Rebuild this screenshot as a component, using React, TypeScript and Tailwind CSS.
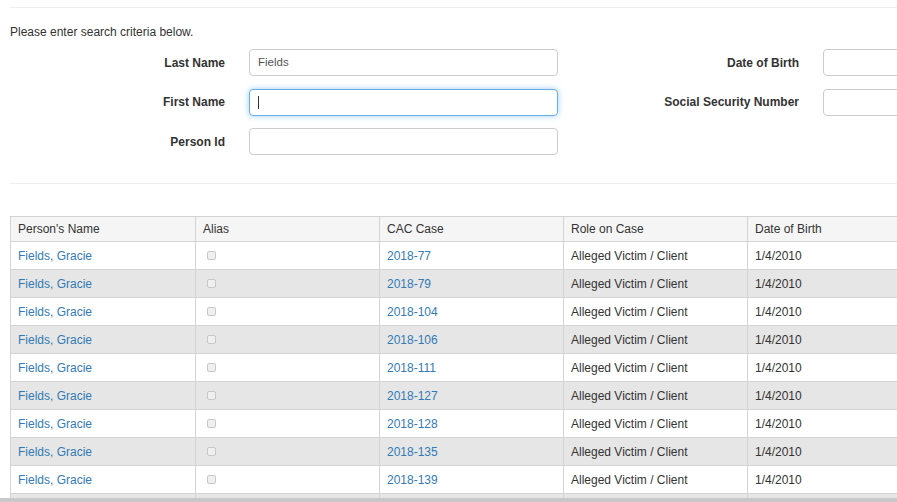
const rows = [
  "2018-77",
  "2018-79",
  "2018-104",
  "2018-106",
  "2018-111",
  "2018-127",
  "2018-128",
  "2018-135",
  "2018-139",
];

const Field = ({ label, value, focused }: { label: string; value?: string; focused?: boolean }) => (
  <div className="flex items-center">
    <label className="w-[215px] shrink-0 text-right font-bold text-[#333]">{label}</label>
    <div
      className={
        focused
          ? "ml-[24px] w-[309px] shrink-0 h-[27px] rounded-[4px] border border-[#66afe9] bg-white px-[8px] flex items-center shadow-[0_0_6px_rgba(102,175,233,0.6)]"
          : "ml-[24px] w-[309px] shrink-0 h-[27px] rounded-[4px] border border-[#ccc] bg-white px-[8px] flex items-center"
      }
    >
      {value && <span className="text-[#555] text-[11.5px]">{value}</span>}
      {focused && <span className="w-px h-[13px] bg-[#333]" />}
    </div>
  </div>
);

const Empty = () => <div className="h-[27px]" />;

export default function App() {
  return (
    <div
      className="h-[502px] w-[897px] overflow-hidden flex flex-col bg-white text-[12px] text-[#333]"
      style={{ fontFamily: '"Liberation Sans", Arial, sans-serif' }}
    >
      <div className="flex-1 overflow-hidden pl-[10px]">
        <div className="mt-[7px] border-t border-[#eee]" />
        <p className="mt-[17px] leading-[14px]">Please enter search criteria below.</p>

        {/* Search form */}
        <div className="mt-[10px] flex">
          <div className="flex flex-col gap-[12.5px]">
            <Field label="Last Name" value="Fields" />
            <Field label="First Name" focused />
            <Field label="Person Id" />
          </div>
          <div className="ml-[26px] flex flex-col gap-[12.5px]">
            <Field label="Date of Birth" />
            <Field label="Social Security Number" />
            <Empty />
          </div>
        </div>

        <div className="mt-[28px] border-t border-[#eee]" />

        {/* Results */}
        <table className="mt-[32px] w-[921px] table-fixed border-collapse">
          <thead>
            <tr className="bg-[#f5f5f5] h-[25px]">
              {["Person's Name", "Alias", "CAC Case", "Role on Case", "Date of Birth"].map((h, i) => (
                <th
                  key={h}
                  className={
                    i === 0
                      ? "w-[185px] border border-[#d4d4d4] px-[7px] text-left font-normal"
                      : "w-[184px] border border-[#d4d4d4] px-[7px] text-left font-normal"
                  }
                >
                  {h}
                </th>
              ))}
            </tr>
          </thead>
          <tbody>
            {rows.map((c, i) => (
              <tr key={c} className={i % 2 === 0 ? "h-[28px] bg-white" : "h-[28px] bg-[#e6e6e6]"}>
                <td className="border border-[#d4d4d4] px-[7px] text-[#337ab7]">Fields, Gracie</td>
                <td className="border border-[#d4d4d4] px-[11px]">
                  <span className="block w-[9px] h-[9px] rounded-[2px] border border-[#c8c8c8] bg-[#f0f0f0]" />
                </td>
                <td className="border border-[#d4d4d4] px-[7px] text-[#337ab7]">{c}</td>
                <td className="border border-[#d4d4d4] px-[7px]">Alleged Victim / Client</td>
                <td className="border border-[#d4d4d4] px-[7px]">1/4/2010</td>
              </tr>
            ))}
            <tr className="h-[28px] bg-[#e6e6e6]">
              <td className="border border-[#d4d4d4]" />
              <td className="border border-[#d4d4d4]" />
              <td className="border border-[#d4d4d4]" />
              <td className="border border-[#d4d4d4]" />
              <td className="border border-[#d4d4d4]" />
            </tr>
          </tbody>
        </table>
      </div>
      <div className="h-[4px] shrink-0 bg-[#c8c8c8]" />
    </div>
  );
}
